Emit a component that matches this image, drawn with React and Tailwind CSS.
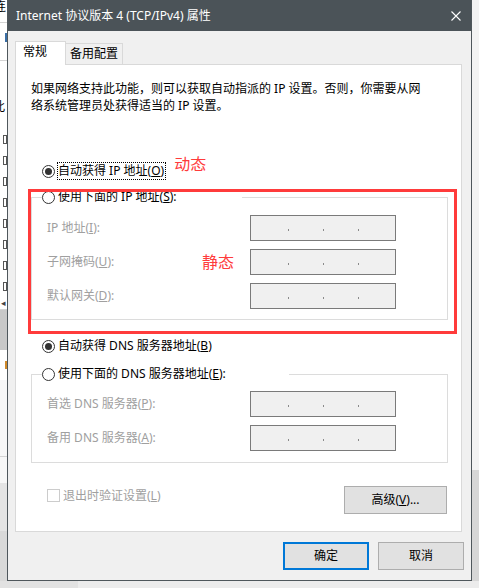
import React from 'react';

const FONT = "font-['Noto_Sans','Noto_Sans_CJK_SC',sans-serif]";

function Radio({ checked }) {
  return (
    <span className="w-[13px] h-[13px] rounded-full border border-[#333333] bg-white flex items-center justify-center shrink-0">
      {checked && <span className="w-[7px] h-[7px] rounded-full bg-[#333333]" />}
    </span>
  );
}

function IpBox() {
  return (
    <div className="w-[146px] h-[26px] border border-[#7a7a7a] bg-[#f0f0f0] flex items-center pl-[37px] pt-[3px] gap-[34px]">
      <span className="w-px h-[2px] bg-[#8a8a8a]" />
      <span className="w-px h-[2px] bg-[#8a8a8a]" />
      <span className="w-px h-[2px] bg-[#8a8a8a]" />
    </div>
  );
}

function FieldRow({ label, children }) {
  return (
    <div className="flex items-center h-[26px]">
      {label}
      <IpBox />
    </div>
  );
}

// background window peeking out on the left
function LeftStrip() {
  const boxes = [0, 1, 2, 3, 4, 5, 6, 7];
  return (
    <div className="w-[7px] shrink-0 flex flex-col overflow-hidden bg-white">
      <div className="h-[22px] leading-[13px] text-[12px] text-black -ml-[6px]">连</div>
      <div className="h-px bg-[#d4d4d4]" />
      <div className="h-[37px] flex flex-col">
        <div className="h-[10px]" />
        <div className="ml-[5px] w-[2px] h-[9px] bg-[#3a6ea5]" />
      </div>
      <div className="h-px bg-[#d4d4d4]" />
      <div className="h-[38px]" />
      <div className="h-[20px] text-[12px] leading-[16px] text-black -ml-[7px]">此</div>
      <div className="h-[10px]" />
      {boxes.map((b) => (
        <div key={b} className="h-[21px] flex items-center">
          <span className="ml-[3px] w-[6px] h-[9px] border border-[#555555] bg-white" />
        </div>
      ))}
      <div className="h-[12px] text-[9px] leading-[12px] text-[#444444] pl-[1px]">◂</div>
      <div className="h-px bg-[#d4d4d4]" />
      <div className="h-[40px] bg-[#c8c8c8]" />
      <div className="h-[30px] flex items-center">
        <span className="ml-[5px] w-[2px] h-[8px] bg-[#d08a2a]" />
      </div>
      <div className="h-[76px] bg-[#f7f7f7]" />
      <div className="h-px bg-[#d4d4d4]" />
      <div className="h-[26px] bg-[#f7f7f7]" />
      <div className="h-[48px] bg-[#e4e4e4]" />
      <div className="flex-1 bg-[#d9d9d9]" />
    </div>
  );
}

function Dialog() {
  return (
    <div className="w-[465px] shrink-0 flex flex-col border-x border-b border-[#4f575c] bg-[#f0f0f0]">
      {/* title bar */}
      <div className="h-[31px] bg-[#4b5358] flex items-center justify-between pl-[8px] pr-[10px]">
        <span className="text-white text-[12px] leading-[16px]">Internet 协议版本 4 (TCP/IPv4) 属性</span>
        <svg width="10" height="10" viewBox="0 0 10 10" className="shrink-0">
          <path d="M0.5 0.5L9.5 9.5M9.5 0.5L0.5 9.5" stroke="#ffffff" strokeWidth="1.1" />
        </svg>
      </div>

      {/* tabs */}
      <div className="pt-[10px] pl-[7px] pr-[9px] flex flex-col">
        <div className="flex items-end h-[24px] -mb-px relative z-10">
          <div className="w-[51px] h-[24px] bg-white border border-b-0 border-[#d9d9d9] pl-[7px] pt-[2px] text-[12px] leading-[16px] text-black">
            常规
          </div>
          <div className="w-[57px] h-[21px] mb-px bg-[#f0f0f0] border border-b-0 border-[#d9d9d9] border-l-0 flex items-center justify-center text-[12px] leading-[16px] text-black">
            备用配置
          </div>
        </div>

        {/* panel */}
        <div className="relative h-[468px] bg-white border border-[#d9d9d9] pl-[15px] pr-[13px] pt-[15px] flex flex-col">
          <p className="text-[12px] leading-[17px] text-black">
            如果网络支持此功能，则可以获取自动指派的 IP 设置。否则，你需要从网
            <br />
            络系统管理员处获得适当的 IP 设置。
          </p>

          <div className="mt-[48px] h-[18px] flex items-center ml-[11px]">
            <Radio checked />
            <span className="ml-[2px] h-[18px] border border-dotted border-black pr-[1px] text-[12px] leading-[16px] text-black">
              自动获得 IP 地址(<u>O</u>)
            </span>
            <span className="ml-[8px] self-start -mt-[8px] text-[16px] leading-[20px] text-[#ff3b3b]">动态</span>
          </div>

          <fieldset className="mt-[8px] border border-[#dcdcdc]">
            <legend className="ml-[10px] w-[200px]">
              <div className="h-[18px] flex items-center gap-[3px] text-[12px] leading-[16px] text-black">
                <Radio />
                <span>使用下面的 IP 地址(<u>S</u>):</span>
              </div>
            </legend>
            <div className="pl-[15px] pt-[9px] pb-[10px] flex flex-col gap-[8px] text-[12px] leading-[16px] text-[#a0a0a0]">
              <FieldRow label={<span className="w-[203px]">IP 地址(<u>I</u>):</span>} />
              <FieldRow
                label={
                  <>
                    <span className="w-[155px]">子网掩码(<u>U</u>):</span>
                    <span className="w-[48px] text-[16px] leading-[20px] text-[#ff3b3b]">静态</span>
                  </>
                }
              />
              <FieldRow label={<span className="w-[203px]">默认网关(<u>D</u>):</span>} />
            </div>
          </fieldset>

          <div className="mt-[17px] h-[18px] flex items-center gap-[3px] ml-[11px] text-[12px] leading-[16px] text-black">
            <Radio checked />
            <span>自动获得 DNS 服务器地址(<u>B</u>)</span>
          </div>

          <fieldset className="mt-[10px] border border-[#dcdcdc]">
            <legend className="ml-[10px] w-[247px]">
              <div className="h-[18px] flex items-center gap-[3px] text-[12px] leading-[16px] text-black">
                <Radio />
                <span>使用下面的 DNS 服务器地址(<u>E</u>):</span>
              </div>
            </legend>
            <div className="pl-[15px] pt-[8px] pb-[11px] flex flex-col gap-[8px] text-[12px] leading-[16px] text-[#a0a0a0]">
              <FieldRow label={<span className="w-[203px]">首选 DNS 服务器(<u>P</u>):</span>} />
              <FieldRow label={<span className="w-[203px]">备用 DNS 服务器(<u>A</u>):</span>} />
            </div>
          </fieldset>

          <div className="mt-[23px] flex items-start justify-between">
            <div className="mt-px h-[17px] flex items-center gap-[3px] ml-[16px] text-[12px] leading-[16px] text-[#a0a0a0]">
              <span className="w-[13px] h-[13px] border border-[#cccccc] bg-white shrink-0" />
              <span>退出时验证设置(<u>L</u>)</span>
            </div>
            <button className="w-[103px] h-[28px] mr-px bg-[#e1e1e1] border border-[#adadad] text-[12px] leading-[16px] text-black">
              高级(<u>V</u>)...
            </button>
          </div>

          {/* annotation box */}
          <div className="absolute left-[12px] top-[124px] w-[429px] h-[145px] border-[3px] border-[#ff3b3b] pointer-events-none" />
        </div>
      </div>

      {/* footer buttons */}
      <div className="flex justify-end gap-[9px] pr-[7px] pt-[10px] pb-[10px]">
        <button className="w-[86px] h-[28px] bg-[#e1e1e1] border-2 border-[#0078d7] text-[12px] leading-[16px] text-black">
          确定
        </button>
        <button className="w-[86px] h-[28px] bg-[#e1e1e1] border border-[#adadad] text-[12px] leading-[16px] text-black">
          取消
        </button>
      </div>
    </div>
  );
}

function RightStrip() {
  return (
    <div className="w-[7px] shrink-0 flex flex-col">
      <div className="h-[470px] bg-[#f3f3f3]" />
      <div className="flex-1 bg-[#d6d6d6]" />
    </div>
  );
}

export default function App() {
  return (
    <div className={`w-[479px] h-[588px] overflow-hidden flex flex-col bg-[#ebebeb] ${FONT}`}>
      <div className="flex h-[581px]">
        <LeftStrip />
        <Dialog />
        <RightStrip />
      </div>
      <div className="flex-1 flex">
        <div className="w-[78px] bg-[#e2e2e2]" />
        <div className="flex-1 bg-[#ececec]" />
      </div>
    </div>
  );
}
